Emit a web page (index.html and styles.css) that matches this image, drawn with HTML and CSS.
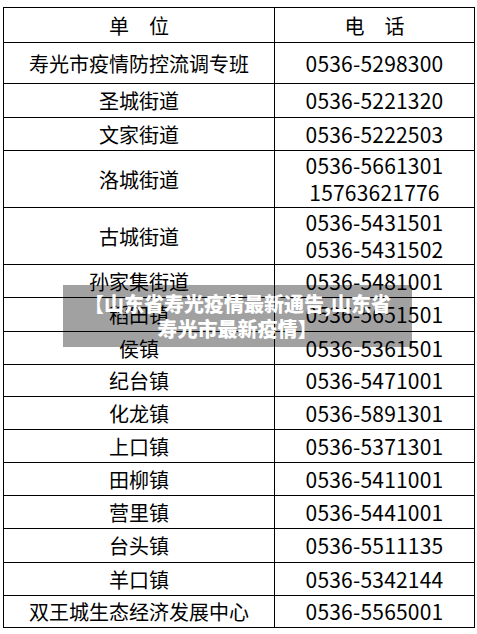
FILE: index.html
```html
<!DOCTYPE html>
<html lang="zh-CN">
<head>
<meta charset="utf-8">
<title>寿光市疫情防控联系电话</title>
<link rel="stylesheet" href="styles.css">
</head>
<body>
<div class="page">
  <table class="phones">
    <colgroup><col class="c-unit"><col class="c-tel"></colgroup>
    <tr class="r-head"><th>单　位</th><th>电　话</th></tr>
    <tr class="r-first"><td>寿光市疫情防控流调专班</td><td class="tel">0536-5298300</td></tr>
    <tr class="r34"><td>圣城街道</td><td class="tel">0536-5221320</td></tr>
    <tr><td>文家街道</td><td class="tel">0536-5222503</td></tr>
    <tr class="r-double"><td>洛城街道</td><td class="tel">0536-5661301<br>15763621776</td></tr>
    <tr class="r-double"><td>古城街道</td><td class="tel">0536-5431501<br>0536-5431502</td></tr>
    <tr><td>孙家集街道</td><td class="tel">0536-5481001</td></tr>
    <tr class="r34"><td>稻田镇</td><td class="tel">0536-5651501</td></tr>
    <tr><td>侯镇</td><td class="tel">0536-5361501</td></tr>
    <tr class="r32"><td>纪台镇</td><td class="tel">0536-5471001</td></tr>
    <tr><td>化龙镇</td><td class="tel">0536-5891301</td></tr>
    <tr><td>上口镇</td><td class="tel">0536-5371301</td></tr>
    <tr><td>田柳镇</td><td class="tel">0536-5411001</td></tr>
    <tr><td>营里镇</td><td class="tel">0536-5441001</td></tr>
    <tr class="r34"><td>台头镇</td><td class="tel">0536-5511135</td></tr>
    <tr><td>羊口镇</td><td class="tel">0536-5342144</td></tr>
    <tr class="r32"><td>双王城生态经济发展中心</td><td class="tel">0536-5565001</td></tr>
  </table>
  <div class="banner">【山东省寿光疫情最新通告,山东省<br>寿光市最新疫情】</div>
</div>
</body>
</html>
```

FILE: styles.css
```css
html, body {
  margin: 0;
  padding: 0;
  background: #ffffff;
}

.page {
  position: relative;
  padding: 7px 0 0 3px;
  font-family: "Noto Sans CJK SC", "Noto Sans", sans-serif;
  color: #000000;
}

.phones {
  border-collapse: collapse;
  table-layout: fixed;
  width: 471px;
  font-size: 20px;
}

.c-unit { width: 271px; }
.c-tel { width: 200px; }

.phones th,
.phones td {
  border: 1px solid #000000;
  padding: 0;
  text-align: center;
  vertical-align: middle;
  font-weight: 400;
  line-height: 27px;
  white-space: nowrap;
}

.phones tr { height: 33px; }
.phones tr.r-head { height: 35px; }
.phones tr.r-first { height: 41px; }
.phones tr.r34 { height: 34px; }
.phones tr.r32 { height: 32px; }
.phones tr.r-double { height: 57px; }

.phones .tel {
  font-size: 21px;
  letter-spacing: 0.2px;
}

.banner {
  position: absolute;
  left: 63px;
  top: 285px;
  width: 349px;
  height: 62px;
  box-sizing: border-box;
  padding-top: 6px;
  background: rgba(0, 0, 0, 0.37);
  color: #ffffff;
  font-size: 20px;
  font-weight: 900;
  line-height: 25px;
  text-align: center;
  white-space: nowrap;
}
```
